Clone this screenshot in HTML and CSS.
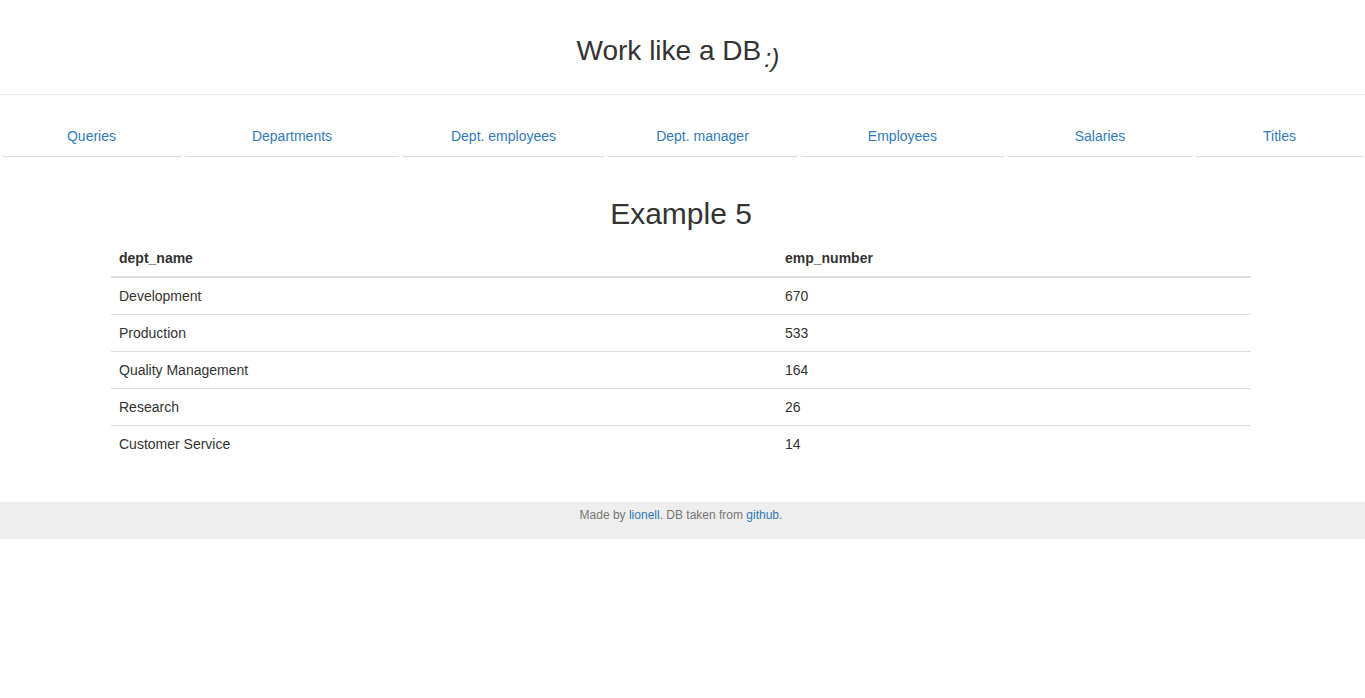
FILE: index.html
```html
<!DOCTYPE html>
<html lang="en">
<head>
<meta charset="utf-8">
<title>Work like a DB</title>
<link rel="stylesheet" href="styles.css">
</head>
<body>
<header class="site-header">
  <h1 class="site-title">Work like a DB<span class="smile">:)</span></h1>
</header>
<nav class="tabs">
  <a class="tab" href="#">Queries</a>
  <a class="tab" href="#">Departments</a>
  <a class="tab" href="#">Dept. employees</a>
  <a class="tab" href="#">Dept. manager</a>
  <a class="tab" href="#">Employees</a>
  <a class="tab" href="#">Salaries</a>
  <a class="tab" href="#">Titles</a>
</nav>
<main class="container">
  <h2 class="example-title">Example 5</h2>
  <table class="data-table">
    <thead>
      <tr><th class="col-name">dept_name</th><th>emp_number</th></tr>
    </thead>
    <tbody>
      <tr><td>Development</td><td>670</td></tr>
      <tr><td>Production</td><td>533</td></tr>
      <tr><td>Quality Management</td><td>164</td></tr>
      <tr><td>Research</td><td>26</td></tr>
      <tr><td>Customer Service</td><td>14</td></tr>
    </tbody>
  </table>
</main>
<footer class="site-footer">
  <p class="footer-text">Made by <a href="#">lionell</a>. DB taken from <a href="#">github</a>.</p>
</footer>
</body>
</html>
```

FILE: styles.css
```css
* { box-sizing: border-box; }

body {
  margin: 0;
  font-family: "Liberation Sans", Arial, Helvetica, sans-serif;
  font-size: 14px;
  line-height: 20px;
  color: #333;
  background: #fff;
}

a { color: #337ab7; text-decoration: none; }

.site-header {
  padding: 35px 9px 28px 0;
  border-bottom: 1px solid #eee;
  text-align: center;
}

.site-title {
  margin: 0;
  font-size: 28px;
  line-height: 31px;
  font-weight: 400;
  color: #333;
}

.smile {
  display: inline-block;
  margin-left: 3px;
  font-size: 25px;
  font-style: italic;
  line-height: 0;
  vertical-align: -7px;
}

.tabs {
  display: grid;
  grid-template-columns: 183fr 218fr 205fr 193fr 207fr 188fr 171fr;
  margin: 20px 0 0;
}

.tab {
  display: block;
  padding: 10px 15px;
  line-height: 20px;
  text-align: center;
  border: 1px solid transparent;
  border-bottom-color: #ddd;
  border-radius: 4px;
}

.container {
  width: 1140px;
  margin: 0 0 0 calc(50% - 571.5px);
  padding: 20px 0 20px;
}

.example-title {
  margin: 20px 0 10px;
  font-size: 30px;
  line-height: 33px;
  font-weight: 400;
  text-align: center;
  color: #333;
}

.data-table {
  width: 100%;
  border-collapse: collapse;
  border-spacing: 0;
  margin-bottom: 20px;
}

.data-table th {
  padding: 8px;
  text-align: left;
  font-weight: 700;
  line-height: 20px;
  border-bottom: 2px solid #ddd;
}

.data-table .col-name { width: 666px; }

.data-table td {
  padding: 8px;
  line-height: 20px;
  border-top: 1px solid #ddd;
}

.data-table tbody tr:first-child td { border-top: 0; }

.site-footer {
  background: #eee;
  padding: 5px 3px 5px 0;
  text-align: center;
}

.footer-text {
  margin: 0 0 10px;
  font-size: 12px;
  line-height: 17px;
  color: #777;
}
```
